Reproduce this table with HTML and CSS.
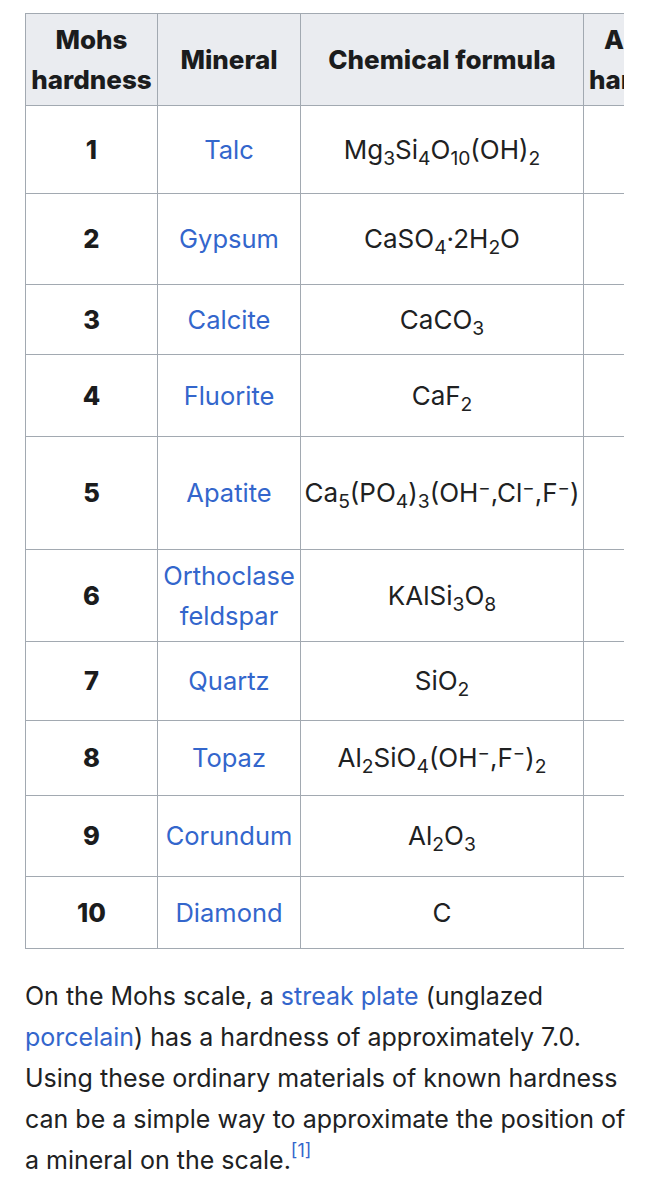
FILE: index.html
```html
<!DOCTYPE html>
<html lang="en">
<head>
<meta charset="utf-8">
<title>Mohs scale</title>
<link rel="stylesheet" href="styles.css">
</head>
<body>
<div class="table-wrap">
  <table class="wikitable">
    <thead>
      <tr class="r-head">
        <th class="c1">Mohs<br>hardness</th>
        <th class="c2">Mineral</th>
        <th class="c3">Chemical formula</th>
        <th class="c4">Absolute hardness<sup class="ref">[5]</sup></th>
        <th class="c5">Image</th>
      </tr>
    </thead>
    <tbody>
      <tr class="r1"><td class="num">1</td><td><a href="#">Talc</a></td><td class="formula">Mg<sub>3</sub>Si<sub>4</sub>O<sub>10</sub>(OH)<sub>2</sub></td><td>1</td><td></td></tr>
      <tr class="r2"><td class="num">2</td><td><a href="#">Gypsum</a></td><td class="formula">CaSO<sub>4</sub>·2H<sub>2</sub>O</td><td>2</td><td></td></tr>
      <tr class="r3"><td class="num">3</td><td><a href="#">Calcite</a></td><td class="formula">CaCO<sub>3</sub></td><td>14</td><td></td></tr>
      <tr class="r4"><td class="num">4</td><td><a href="#">Fluorite</a></td><td class="formula">CaF<sub>2</sub></td><td>21</td><td></td></tr>
      <tr class="r5"><td class="num">5</td><td><a href="#">Apatite</a></td><td class="formula tight">Ca<sub>5</sub>(PO<sub>4</sub>)<sub>3</sub>(OH<sup class="chg">−</sup>,Cl<sup class="chg">−</sup>,F<sup class="chg">−</sup>)</td><td>48</td><td></td></tr>
      <tr class="r6"><td class="num">6</td><td><a href="#">Orthoclase feldspar</a></td><td class="formula">KAlSi<sub>3</sub>O<sub>8</sub></td><td>72</td><td></td></tr>
      <tr class="r7"><td class="num">7</td><td><a href="#">Quartz</a></td><td class="formula">SiO<sub>2</sub></td><td>100</td><td></td></tr>
      <tr class="r8"><td class="num">8</td><td><a href="#">Topaz</a></td><td class="formula">Al<sub>2</sub>SiO<sub>4</sub>(OH<sup class="chg">−</sup>,F<sup class="chg">−</sup>)<sub>2</sub></td><td>200</td><td></td></tr>
      <tr class="r9"><td class="num">9</td><td><a href="#">Corundum</a></td><td class="formula">Al<sub>2</sub>O<sub>3</sub></td><td>400</td><td></td></tr>
      <tr class="r10"><td class="num">10</td><td><a href="#">Diamond</a></td><td class="formula">C</td><td>1600</td><td></td></tr>
    </tbody>
  </table>
</div>
<p class="para">On the Mohs scale, a <a href="#">streak plate</a> (unglazed <a href="#">porcelain</a>) has a hardness of approximately 7.0. Using these ordinary materials of known hardness can be a simple way to approximate the position of a mineral on the scale.<sup class="cite"><a href="#">[1]</a></sup></p>
</body>
</html>
```

FILE: styles.css
```css
html, body {
  margin: 0;
  padding: 0;
  background: #ffffff;
}

body {
  font-family: Inter, "Liberation Sans", sans-serif;
  color: #202122;
  font-size: 25px;
}

a {
  color: #3366cc;
  text-decoration: none;
}

.table-wrap {
  margin: 13px 0 0 25px;
  width: 599px;
  overflow: hidden;
}

.wikitable {
  border-collapse: separate;
  border-spacing: 0;
  table-layout: fixed;
  width: 916px;
  border-left: 1px solid #a2a9b1;
  border-top: 1px solid #a2a9b1;
  font-size: 25.5px;
}

.wikitable th,
.wikitable td {
  box-sizing: border-box;
  border-right: 1px solid #a2a9b1;
  border-bottom: 1px solid #a2a9b1;
  text-align: center;
  vertical-align: middle;
  padding: 0 3px;
  line-height: 40px;
}

.wikitable th {
  background: #eaecf0;
  font-weight: 800;
  font-size: 26px;
  color: #1b1c1d;
}

.c1 { width: 132px; }
.c2 { width: 143px; }
.c3 { width: 283px; }
.c4 { width: 158px; }
.c5 { width: 200px; }

.num {
  font-weight: 800;
  color: #1b1c1d;
}

.formula {
  font-size: 26px;
}

.tight {
  padding: 0 1px;
  white-space: nowrap;
}

sub {
  font-size: 0.74em;
  vertical-align: -0.3em;
  line-height: 0;
}

sup.chg {
  font-size: 0.72em;
  vertical-align: 0.45em;
  line-height: 0;
}

sup.ref {
  font-size: 0.72em;
  vertical-align: 0.6em;
  line-height: 0;
}

.r-head { height: 92px; }
.r1 { height: 88px; }
.r2 { height: 91px; }
.r3 { height: 70px; }
.r4 { height: 82px; }
.r5 { height: 113px; }
.r6 { height: 92px; }
.r7 { height: 79px; }
.r8 { height: 75px; }
.r9 { height: 81px; }
.r10 { height: 72px; }

.para {
  margin: 27px 20px 0 25px;
  line-height: 41px;
  font-size: 25px;
}

.cite {
  font-size: 18px;
  line-height: 0;
  vertical-align: 12px;
}
```
